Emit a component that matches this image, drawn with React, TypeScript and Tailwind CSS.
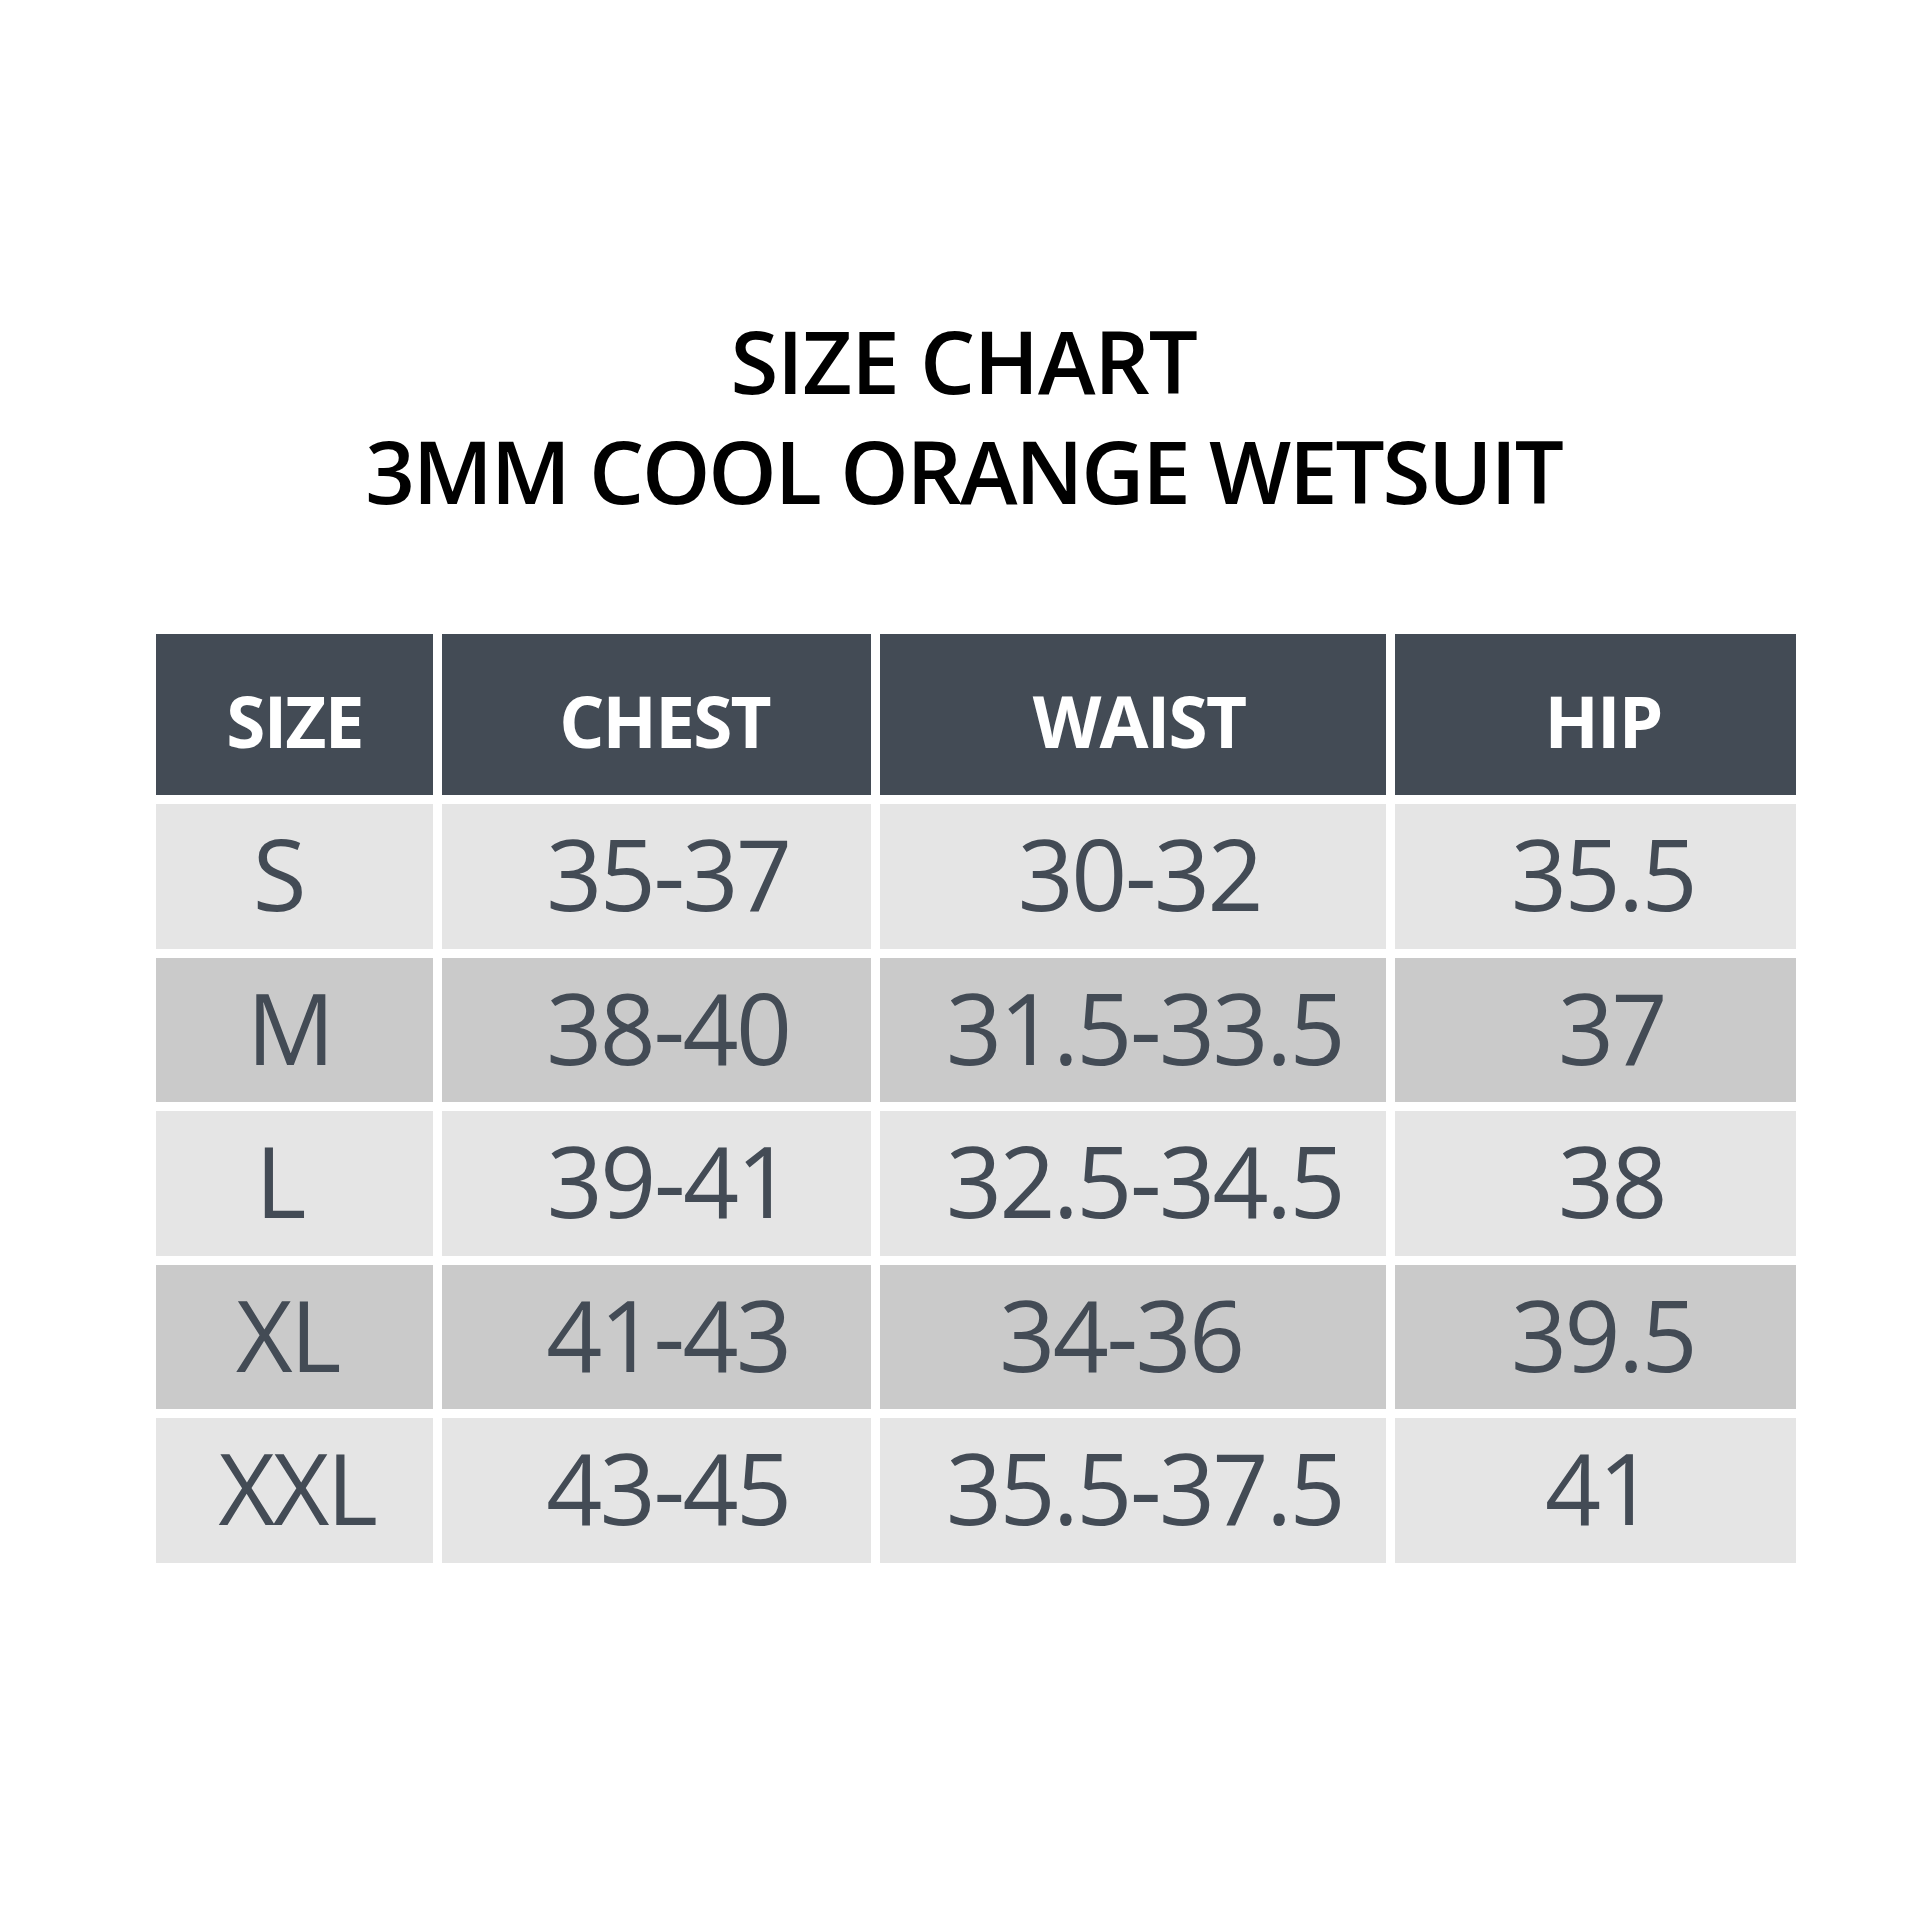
const headers = [
  { label: "SIZE", shift: "" },
  { label: "CHEST", shift: "pl-[16px]" },
  { label: "WAIST", shift: "pl-[12px]" },
  { label: "HIP", shift: "pl-[15px]" },
]

// each cell: value + small nudge so the text sits where the original chart has it
const rows = [
  [
    { v: "S", shift: "pr-[32px]" },
    { v: "35-37", shift: "pl-[23px]" },
    { v: "30-32", shift: "pl-[13px]" },
    { v: "35.5", shift: "pl-[15px]" },
  ],
  [
    { v: "M", shift: "pr-[10px]" },
    { v: "38-40", shift: "pl-[23px]" },
    { v: "31.5-33.5", shift: "pl-[23px]" },
    { v: "37", shift: "pl-[32px]" },
  ],
  [
    { v: "L", shift: "pr-[30px]" },
    { v: "39-41", shift: "pl-[24px]" },
    { v: "32.5-34.5", shift: "pl-[23px]" },
    { v: "38", shift: "pl-[32px]" },
  ],
  [
    { v: "XL", shift: "pr-[14px]" },
    { v: "41-43", shift: "pl-[23px]" },
    { v: "34-36", shift: "pr-[24px]" },
    { v: "39.5", shift: "pl-[15px]" },
  ],
  [
    { v: "XXL", shift: "pl-[5px]" },
    { v: "43-45", shift: "pl-[23px]" },
    { v: "35.5-37.5", shift: "pl-[23px]" },
    { v: "41", shift: "pl-[6px]" },
  ],
]

export default function App() {
  return (
    <div
      className="w-[1920px] h-[1920px] bg-white flex flex-col items-start"
      style={{ fontFamily: '"Open Sans", "Liberation Sans", sans-serif' }}
    >
      {/* Title */}
      <div className="w-full pt-[305px] pl-[7px] flex flex-col items-center text-black font-semibold text-[87px] leading-[110px]">
        <div className="tracking-[-0.014em]">SIZE CHART</div>
        <div className="tracking-tight">3MM COOL ORANGE WETSUIT</div>
      </div>

      {/* Table */}
      <div className="mt-[109px] ml-[156px] grid grid-cols-[277px_429px_506px_401px] grid-rows-[161px_repeat(5,144.5px)] gap-[9px]">
        {headers.map((h) => (
          <div
            key={h.label}
            className={`bg-[#434b55] text-white font-bold text-[71px] leading-none tracking-tight flex items-center justify-center pt-[12px] ${h.shift}`}
          >
            {h.label}
          </div>
        ))}
        {rows.map((row, r) =>
          row.map((cell, c) => (
            <div
              key={`${r}-${c}`}
              className={`${r % 2 === 0 ? "bg-[#e5e5e5]" : "bg-[#cacaca]"} text-[#434b55] text-[98px] leading-none tracking-tight flex items-center justify-center pb-[6px] ${cell.shift}`}
            >
              {cell.v}
            </div>
          ))
        )}
      </div>
    </div>
  )
}
